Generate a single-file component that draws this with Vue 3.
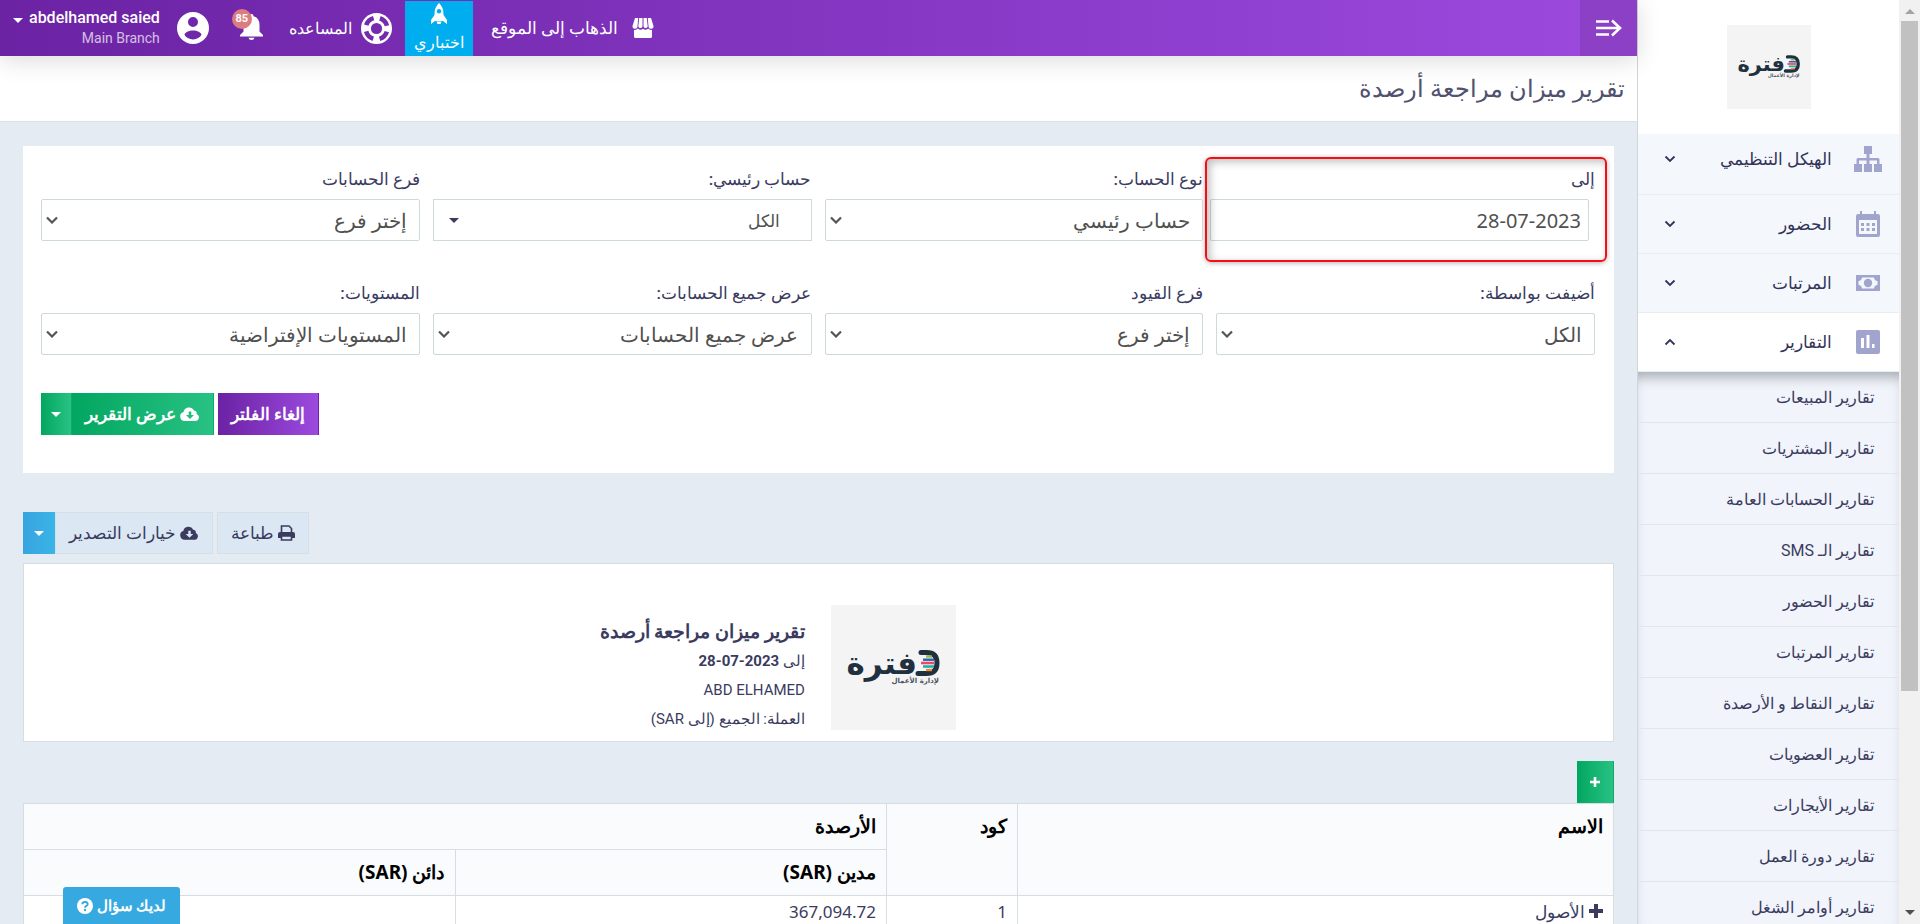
<script setup>
import { ref } from 'vue'

const menu = [
  { label: 'الهيكل التنظيمي', icon: 'tree' },
  { label: 'الحضور', icon: 'calendar' },
  { label: 'المرتبات', icon: 'money' },
  { label: 'التقارير', icon: 'chart', open: true },
]

const reports = [
  'تقارير المبيعات',
  'تقارير المشتريات',
  'تقارير الحسابات العامة',
  'تقارير الـ SMS',
  'تقارير الحضور',
  'تقارير المرتبات',
  'تقارير النقاط و الأرصدة',
  'تقارير العضويات',
  'تقارير الأيجارات',
  'تقارير دورة العمل',
  'تقارير أوامر الشغل',
]

const date = ref('28-07-2023')

const filters = [
  { id: 'account-type', label: 'نوع الحساب:', value: 'حساب رئيسي' },
  { id: 'main-account', label: 'حساب رئيسي:', value: 'الكل', picker: true },
  { id: 'accounts-branch', label: 'فرع الحسابات', value: 'إختر فرع' },
  { id: 'added-by', label: 'أضيفت بواسطة:', value: 'الكل' },
  { id: 'entries-branch', label: 'فرع القيود', value: 'إختر فرع' },
  { id: 'show-accounts', label: 'عرض جميع الحسابات:', value: 'عرض جميع الحسابات' },
  { id: 'levels', label: 'المستويات:', value: 'المستويات الإفتراضية' },
]
</script>

<template>
  <div class="app" dir="rtl">
    <div class="scrollbar" aria-hidden="true">
      <span class="arrow up"></span>
      <span class="thumb"></span>
      <span class="arrow down"></span>
    </div>

    <aside class="sidebar">
      <div class="brand">
        <svg class="brand-logo" viewBox="0 0 125 125" role="img" aria-label="دفترة">
          <rect width="125" height="125" fill="#f4f4f4" />
          <path d="M90 47.500h5.500q10.500 0 10.500 10.500t-10.500 10.500H87" fill="none" stroke="#20303f" stroke-width="5" stroke-linecap="round" />
          <path d="M95 51.500h6" stroke="#8ec03f" stroke-width="2.400" />
          <path d="M92 54.700h11" stroke="#2b62b5" stroke-width="2.400" />
          <path d="M90 58h13" stroke="#f0466b" stroke-width="2.600" />
          <path d="M92 61.500h11" stroke="#19b5a5" stroke-width="2.600" />
          <path d="M95 65h6" stroke="#f08a3c" stroke-width="2.400" />
          <text direction="rtl"><tspan class="logo-word" x="86" y="69">فترة</tspan><tspan class="logo-tag" x="108" y="78">لإدارة الأعمال</tspan></text>
        </svg>
      </div>
      <nav>
        <a v-for="m in menu" :key="m.label" href="#" class="menu-row" :class="{ open: m.open }">
          <span class="menu-icon">
            <svg v-if="m.icon === 'tree'" width="28" height="26" viewBox="0 0 28 26" fill="currentColor">
              <path d="M10 0h8v8h-2.500v4H24a1.500 1.500 0 0 1 1.500 1.500V18H28v8h-8v-8h3v-3.500h-7.500V18H18v8h-8v-8h2.500v-3.500H5V18h3v8H0v-8h2.500v-4.500A1.500 1.500 0 0 1 4 12h8.500V8H10z" />
            </svg>
            <svg v-else-if="m.icon === 'calendar'" width="24" height="26" viewBox="0 0 24 26" fill="currentColor" fill-rule="evenodd">
              <path d="M4 0h2v3h12V0h2v3h2a2 2 0 0 1 2 2v19a2 2 0 0 1-2 2H2a2 2 0 0 1-2-2V5a2 2 0 0 1 2-2h2zM3 9v14h18V9z" />
              <path d="M5 12h3v3H5zm5.500 0h3v3h-3zm5.500 0h3v3h-3zM5 17h3v3H5zm5.500 0h3v3h-3zm5.500 0h3v3h-3z" />
            </svg>
            <svg v-else-if="m.icon === 'money'" width="24" height="16" viewBox="0 0 24 16" fill="currentColor" fill-rule="evenodd">
              <path d="M0 0h24v16H0zM6 2.500A4 4 0 0 1 2.500 6v4A4 4 0 0 1 6 13.500h12a4 4 0 0 1 3.500-3.500V6A4 4 0 0 1 18 2.500z" />
              <circle cx="12" cy="8" r="4.200" />
            </svg>
            <svg v-else width="24" height="24" viewBox="0 0 24 24" fill="currentColor" fill-rule="evenodd">
              <path d="M2 0h20a2 2 0 0 1 2 2v20a2 2 0 0 1-2 2H2a2 2 0 0 1-2-2V2a2 2 0 0 1 2-2zM5 8v10h3V8zm5.500-3v13h3V5zM16 14v4h2.500v-4z" />
            </svg>
          </span>
          <span class="menu-label">{{ m.label }}</span>
          <svg class="chevron" width="12" height="8" viewBox="0 0 12 8"><path :d="m.open ? 'M1.500 6.500 6 2l4.500 4.500' : 'M1.500 1.500 6 6l4.500-4.500'" fill="none" stroke="currentColor" stroke-width="1.800" /></svg>
        </a>
        <div class="submenu">
          <a v-for="r in reports" :key="r" href="#">{{ r }}</a>
        </div>
      </nav>
    </aside>

    <div class="main">
      <header class="topbar">
        <button class="toggle" type="button" aria-label="القائمة">
          <svg width="26" height="18" viewBox="0 0 26 18" fill="none" stroke="#fff" stroke-width="2.600">
            <path d="M0 2.500h13M0 9h24M0 15.500h13M16 1.500 24 9l-8 7.500" />
          </svg>
        </button>
        <a href="#" class="site-link">
          <svg width="22" height="20" viewBox="0 0 22 20" fill="#fff">
            <path d="M3 0h3.200L5.500 8.500A2.300 2.300 0 0 1 .5 8zM7.200 0h3.300v8.500a2.200 2.200 0 0 1-4.200 0zM11.500 0h3.300l.9 8.500a2.200 2.200 0 0 1-4.200 0zM15.800 0H19l2.500 8a2.300 2.300 0 0 1-5 .5zM2 12q2.300 0 3.800-1.500Q8.500 13 11 10.800q2.500 2.200 5.200-.3Q17.700 12 20 12v6.500q0 1.500-1.500 1.500h-15Q2 20 2 18.500z" />
          </svg>
          <span>الذهاب إلى الموقع</span>
        </a>
        <a href="#" class="trial">
          <svg width="16" height="22" viewBox="0 0 16 22" fill="#fff" fill-rule="evenodd">
            <path d="M8 0q5 4.500 4.500 12L16 17v4l-4-3H4l-4 3v-4l3.500-5Q3 4.500 8 0zm0 6a2.200 2.200 0 1 0 0 4.400A2.200 2.200 0 0 0 8 6zM5.500 18.500h5L9.500 21h-3z" />
          </svg>
          <span>اختباري</span>
        </a>
        <a href="#" class="help">
          <svg width="31" height="31" viewBox="0 0 31 31">
            <circle cx="15.500" cy="15.500" r="15.500" fill="#fff" />
            <circle cx="15.500" cy="15.500" r="10.800" fill="none" stroke="#752bae" stroke-width="4.600" stroke-dasharray="10.500 6.460" stroke-dashoffset="-3.200" />
            <circle cx="15.500" cy="15.500" r="5.600" fill="#752bae" />
          </svg>
          <span>المساعده</span>
        </a>
        <button class="bell" type="button" aria-label="الإشعارات">
          <svg width="23" height="26" viewBox="0 0 23 26" fill="#fff">
            <path d="M11.500 0q2 0 2 2.200Q19.500 4 19.500 11v6.500L23 21v1.500H0V21l3.500-3.500V11q0-7 6-8.800Q9.500 0 11.500 0zM8.500 23.700h6q-.5 2.300-3 2.300t-3-2.300z" />
          </svg>
          <span class="badge">85</span>
        </button>
        <button class="user" type="button">
          <svg width="32" height="32" viewBox="0 0 32 32" fill-rule="evenodd" fill="#fff">
            <path d="M16 0a16 16 0 1 1 0 32 16 16 0 0 1 0-32zm0 5a5 5 0 1 0 0 10 5 5 0 0 0 0-10zm0 13.500c-4 0-8.500 2-8.500 4.300C9 25.500 12 27.500 16 27.500s7-2 8.500-4.700c0-2.300-4.500-4.300-8.500-4.300z" />
          </svg>
          <span class="who">
            <span class="name">abdelhamed saied</span>
            <span class="branch">Main Branch</span>
          </span>
          <span class="caret"></span>
        </button>
      </header>

      <div class="titlebar"><h1>تقرير ميزان مراجعة أرصدة</h1></div>

      <main class="content">
        <form class="filter-card" @submit.prevent>
          <div class="fields">
            <div class="field">
              <label for="date-to">إلى</label>
              <div class="control shifted"><input id="date-to" v-model="date" type="text" /></div>
              <span class="highlight"></span>
            </div>
            <div v-for="f in filters" :key="f.id" class="field">
              <label :for="f.id">{{ f.label }}</label>
              <div class="control" :class="{ picker: f.picker }">
                <select :id="f.id"><option>{{ f.value }}</option></select>
                <span v-if="f.picker" class="caret dark"></span>
                <svg v-else class="select-arrow" width="12" height="8" viewBox="0 0 12 8"><path d="M1 1.500 6 6.500l5-5" fill="none" stroke="#555" stroke-width="2.200" /></svg>
              </div>
            </div>
          </div>
          <div class="actions">
            <button type="button" class="btn purple">إلغاء الفلتر</button>
            <div class="split">
              <button type="submit" class="btn green">
                <svg width="20" height="14" viewBox="0 0 20 14" fill="#fff" fill-rule="evenodd"><path d="M5 14a4.600 4.600 0 0 1-1.500-9A5.600 5.600 0 0 1 14 3.500a3 3 0 0 1 2.600 3.600A3.600 3.600 0 0 1 16 14zM8.700 4.500V8H6l4 4 4-4h-2.700V4.500z" /></svg>
                عرض التقرير
              </button>
              <button type="button" class="btn green drop" aria-label="المزيد"><span class="caret"></span></button>
            </div>
          </div>
        </form>

        <div class="toolbar">
          <button type="button" class="btn soft">
            <svg width="17" height="16" viewBox="0 0 17 16" fill="none" stroke="currentColor" stroke-width="1.600"><path d="M3.500 8V1h7.500l2.500 2.500V8M3.500 11v4h10v-4z" /><path d="M2 7h13q2 0 2 2v4h-3v-2H3v2H0V9q0-2 2-2z" fill="currentColor" stroke="none" /></svg>
            طباعة
          </button>
          <div class="split">
            <button type="button" class="btn soft">
              <svg width="19" height="14" viewBox="0 0 20 14" fill="currentColor" fill-rule="evenodd"><path d="M5 14a4.600 4.600 0 0 1-1.500-9A5.600 5.600 0 0 1 14 3.500a3 3 0 0 1 2.600 3.600A3.600 3.600 0 0 1 16 14zM8.700 4.500V8H6l4 4 4-4h-2.700V4.500z" /></svg>
              خيارات التصدير
            </button>
            <button type="button" class="btn blue" aria-label="خيارات"><span class="caret"></span></button>
          </div>
        </div>

        <section class="report">
          <svg class="report-logo" viewBox="0 0 125 125" role="img" aria-label="دفترة">
            <rect width="125" height="125" fill="#f4f4f4" />
            <path d="M90 47.500h5.500q10.500 0 10.500 10.500t-10.500 10.500H87" fill="none" stroke="#20303f" stroke-width="5" stroke-linecap="round" />
            <path d="M95 51.500h6" stroke="#8ec03f" stroke-width="2.400" />
            <path d="M92 54.700h11" stroke="#2b62b5" stroke-width="2.400" />
            <path d="M90 58h13" stroke="#f0466b" stroke-width="2.600" />
            <path d="M92 61.500h11" stroke="#19b5a5" stroke-width="2.600" />
            <path d="M95 65h6" stroke="#f08a3c" stroke-width="2.400" />
            <text direction="rtl"><tspan class="logo-word" x="86" y="69">فترة</tspan><tspan class="logo-tag" x="108" y="78">لإدارة الأعمال</tspan></text>
          </svg>
          <div class="report-text">
            <h2>تقرير ميزان مراجعة أرصدة</h2>
            <p>إلى <b dir="ltr">28-07-2023</b></p>
            <p>ABD ELHAMED</p>
            <p>العملة: الجميع (إلى SAR)</p>
          </div>
        </section>

        <button type="button" class="btn green add" aria-label="توسيع">
          <svg width="10" height="10" viewBox="0 0 10 10"><path d="M5 0v10M0 5h10" stroke="#fff" stroke-width="2.600" /></svg>
        </button>

        <table class="grid">
          <colgroup><col class="c-name" /><col class="c-code" /><col class="c-bal" /><col class="c-bal" /></colgroup>
          <thead>
            <tr><th rowspan="2">الاسم</th><th rowspan="2">كود</th><th colspan="2">الأرصدة</th></tr>
            <tr><th>مدين (SAR)</th><th>دائن (SAR)</th></tr>
          </thead>
          <tbody>
            <tr>
              <td><svg width="14" height="14" viewBox="0 0 14 14"><path d="M7 0v14M0 7h14" stroke="#3a3b5f" stroke-width="4" /></svg> الأصول</td>
              <td>1</td>
              <td>367,094.72</td>
              <td></td>
            </tr>
          </tbody>
        </table>
      </main>

      <button type="button" class="ask">
        <span>لديك سؤال</span>
        <svg width="16" height="16" viewBox="0 0 16 16"><circle cx="8" cy="8" r="8" fill="#fff" /><path d="M5.300 6.300Q5.400 4 8 4t2.700 2.200Q10.700 7.400 9 8.200 8 8.700 8 9.800" fill="none" stroke="#36a9e1" stroke-width="1.900" /><circle cx="8" cy="12" r="1.200" fill="#36a9e1" /></svg>
      </button>
    </div>
  </div>
</template>

<style>
html,
body {
  margin: 0;
}
</style>

<style scoped>
* {
  box-sizing: border-box;
}
.app {
  display: flex;
  height: 100vh;
  overflow: hidden;
  background: #e4ebf3;
  color: #3a3b5f;
  font-family: Roboto, "Noto Sans", sans-serif;
  font-size: 16px;
}
a {
  color: inherit;
  text-decoration: none;
}
button {
  border: 0;
  padding: 0;
  background: none;
  color: inherit;
  font: inherit;
}
svg {
  flex: none;
}

.scrollbar {
  display: flex;
  flex-direction: column;
  align-items: center;
  flex: none;
  width: 21px;
  padding: 9px 0;
  background: #f1f1f1;
}
.arrow {
  border: 5px solid transparent;
}
.up {
  border-top: 0;
  border-bottom-color: #a3a3a3;
}
.down {
  border-bottom: 0;
  border-top-color: #505050;
  margin-top: auto;
}
.thumb {
  width: 17px;
  height: 74%;
  margin-top: 7px;
  background: #c1c1c1;
}

.sidebar {
  display: flex;
  flex-direction: column;
  flex: none;
  width: 262px;
  background: #fff;
  border-left: 1px solid #d0d5da;
}
.brand {
  display: flex;
  justify-content: center;
  padding: 25px 0;
}
.brand-logo {
  width: 84px;
  height: 84px;
}
.logo-word {
  font: bold 31px "DejaVu Sans", sans-serif;
  fill: #20303f;
}
.logo-tag {
  font: bold 7px "DejaVu Sans", sans-serif;
  fill: #4c5763;
}
.menu-row {
  display: flex;
  align-items: center;
  height: 59px;
  padding: 0 17px 0 26px;
  border-bottom: 1px solid #e9eef2;
  background: #f4f8fc;
  color: #33345a;
  font-size: 17px;
}
.menu-row:first-child {
  height: 61px;
  padding-bottom: 10px;
}
.menu-row.open {
  background: #fff;
}
.menu-icon {
  display: flex;
  justify-content: center;
  width: 28px;
  color: #a1a4cc;
}
.menu-label {
  flex: 1;
  padding-right: 22px;
}
.submenu {
  background: #f1f4fa;
  box-shadow: inset 0 14px 12px -8px rgba(60, 70, 80, 0.35), inset 0 0 12px rgba(60, 70, 80, 0.08);
}
.submenu a {
  display: flex;
  align-items: center;
  height: 51px;
  padding: 0 25px;
  border-bottom: 1px solid #e2e6ea;
}

.main {
  position: relative;
  display: flex;
  flex-direction: column;
  flex: 1;
  min-width: 0;
}
.topbar {
  position: relative;
  display: flex;
  align-items: stretch;
  flex: none;
  height: 56px;
  background: linear-gradient(90deg, #6b22a3, #9c4adf);
  box-shadow: 0 4px 24px rgba(0, 0, 0, 0.15);
  color: #fff;
}
.toggle {
  display: flex;
  align-items: center;
  justify-content: center;
  width: 57px;
  margin-left: auto;
  background: #8b40c5;
}
.site-link {
  display: flex;
  align-items: center;
  gap: 14px;
  margin-left: 18px;
  font-size: 17px;
}
.trial {
  display: flex;
  flex-direction: column;
  align-items: center;
  gap: 8px;
  width: 68px;
  margin-top: 1px;
  padding-top: 2px;
  background: #00aeef;
  line-height: 20px;
}
.help {
  display: flex;
  align-items: center;
  gap: 9px;
  margin: 0 13px 0 26px;
}
.bell {
  position: relative;
  width: 31px;
  margin-left: 23px;
  padding-top: 2px;
  text-align: right;
}
.badge {
  position: absolute;
  top: 9px;
  left: 0;
  width: 20px;
  height: 20px;
  border-radius: 50%;
  background: #dc7c80;
  font-size: 11px;
  font-weight: 700;
  line-height: 20px;
  text-align: center;
}
.user {
  display: flex;
  align-items: center;
  gap: 17px;
  padding-left: 13px;
}
.who {
  display: flex;
  flex-direction: column;
  align-items: flex-start;
}
.name {
  font-weight: 500;
  line-height: 20px;
}
.branch {
  font-size: 14px;
  line-height: 20px;
  opacity: 0.7;
}
.caret {
  border: 5px solid transparent;
  border-top-color: #fff;
  border-bottom: 0;
}
.user .caret {
  align-self: flex-start;
  margin: 18px -11px 0 0;
}
.caret.dark {
  border-top-color: #3a3b5f;
}

.titlebar {
  flex: none;
  height: 66px;
  padding: 0 12px;
  background: #fff;
  border-bottom: 1px solid #dbe1e7;
}
h1 {
  margin: 0;
  color: #50516f;
  font-size: 24px;
  font-weight: 300;
  line-height: 66px;
}

.content {
  padding: 24px 23px 0;
}
.filter-card {
  height: 327px;
  padding: 19px 19px 0 18px;
  background: #fff;
}
.fields {
  display: grid;
  grid-template-columns: repeat(4, 1fr);
  gap: 38px 13px;
}
.field {
  position: relative;
}
label {
  display: block;
  padding-top: 2px;
  margin-bottom: 8px;
  line-height: 24px;
  font-size: 17px;
  font-weight: 500;
}
.control {
  position: relative;
  height: 42px;
}
.control.shifted {
  margin: 0 6px 0 -6px;
}
input,
select {
  display: block;
  width: 100%;
  height: 100%;
  padding: 0 12px;
  border: 1px solid #cdd9dc;
  border-radius: 2px;
  background: #fff;
  color: #505050;
  font-family: "Noto Sans", sans-serif;
  font-size: 20px;
  appearance: none;
}
input {
  padding: 0 7px;
}
.picker select {
  padding: 0 31px;
  border-radius: 0;
  font-size: 17px;
}
.select-arrow {
  position: absolute;
  left: 5px;
  top: 17px;
}
.control .caret {
  position: absolute;
  left: 16px;
  top: 19px;
}
.highlight {
  position: absolute;
  top: -8px;
  right: -12px;
  bottom: -21px;
  left: -11px;
  border: 2px solid #f80d12;
  border-radius: 6px;
  box-shadow: 0 1px 5px rgba(0, 0, 0, 0.3), inset 3px 3px 8px rgba(0, 0, 0, 0.25);
  pointer-events: none;
}
.actions {
  display: flex;
  justify-content: flex-end;
  gap: 4px;
  margin-top: 38px;
}
.split {
  display: flex;
}
.btn {
  display: flex;
  align-items: center;
  justify-content: center;
  gap: 4px;
  height: 42px;
  padding: 0 13px;
  font-size: 17px;
  white-space: nowrap;
}
.purple {
  border-right: 1px solid #6b22a3;
  background: linear-gradient(90deg, #6b22a3, #9c4adf);
  color: #fff;
  font-weight: 700;
}
.green {
  border-right: 1px solid #14a66a;
  background: linear-gradient(90deg, #02a660, #28c284);
  color: #fff;
  font-weight: 700;
}
.green.drop {
  width: 31px;
  padding: 0;
}
.toolbar {
  display: flex;
  justify-content: flex-end;
  gap: 4px;
  margin: 39px 0 9px;
}
.soft {
  border: 1px solid #d5dfe6;
  background: #dbe7f3;
  font-weight: 500;
}
.blue {
  width: 32px;
  padding: 0;
  background: linear-gradient(90deg, #37a4e0, #3ab4e6);
}
.report {
  display: flex;
  gap: 26px;
  height: 179px;
  padding: 41px 41.3% 0 0;
  background: #fff;
  border: 1px solid #d5dfe3;
}
.report-logo {
  width: 125px;
  height: 125px;
}
h2 {
  margin: 12px 0 0;
  font-size: 19px;
  font-weight: 700;
  line-height: 30px;
  white-space: nowrap;
}
p {
  margin: 0;
  font-size: 15px;
  line-height: 29px;
}
.add {
  width: 37px;
  margin-top: 19px;
  padding: 0;
}
.grid {
  width: 100%;
  table-layout: fixed;
  border-collapse: collapse;
  font-family: "Noto Sans", sans-serif;
  font-size: 17px;
}
.c-name {
  width: 596px;
}
.c-code {
  width: 131px;
}
th,
td {
  height: 46px;
  padding: 10px;
  border: 1px solid #d5dfe3;
  text-align: right;
  vertical-align: top;
  line-height: 24px;
}
th {
  background: #fafbfd;
  color: #000;
  font-size: 19px;
  font-weight: 700;
}
td {
  padding: 4px 10px;
  background: #fff;
}
.ask {
  position: absolute;
  bottom: 0;
  left: 63px;
  display: flex;
  align-items: center;
  justify-content: center;
  gap: 4px;
  width: 117px;
  height: 37px;
  border-radius: 3px 3px 0 0;
  background: #36a9e1;
  color: #fff;
  font-size: 15px;
  font-weight: 700;
}
</style>
